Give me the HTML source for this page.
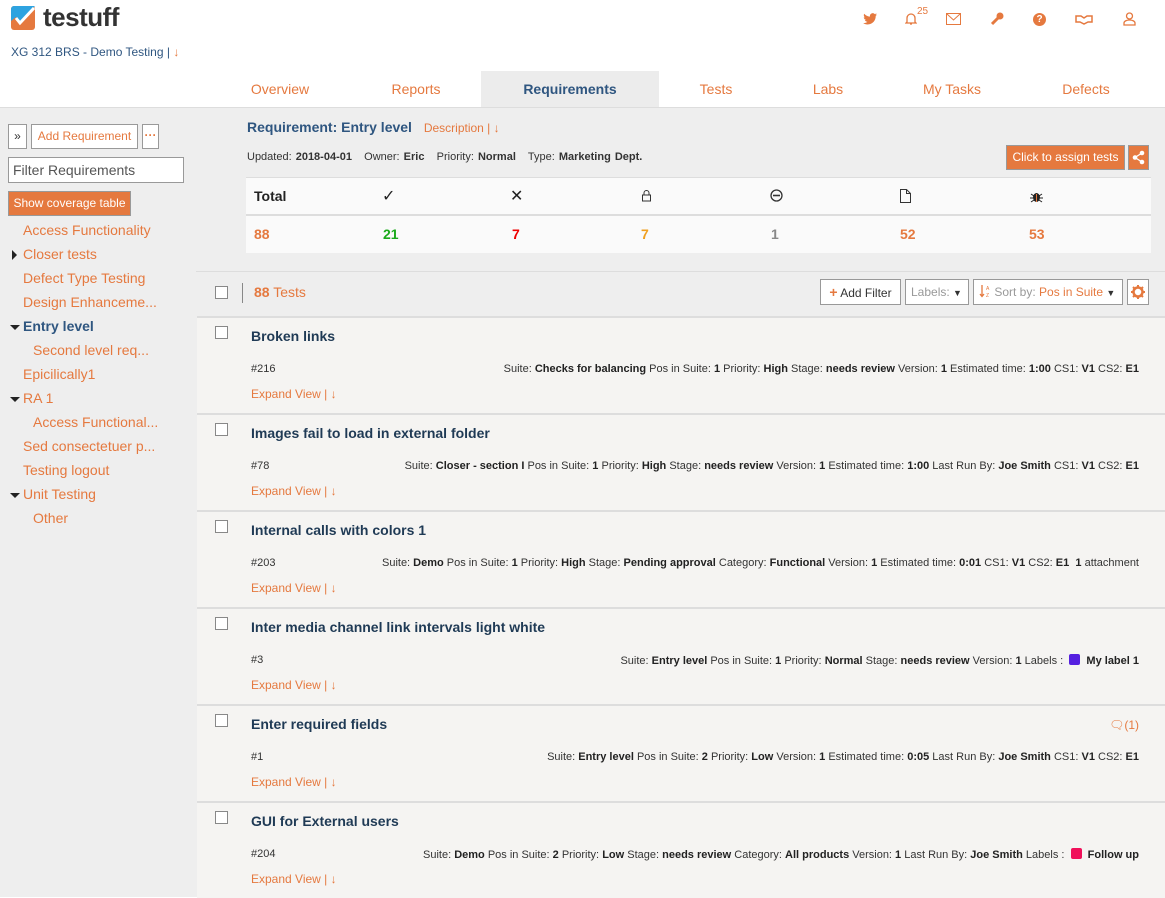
<!DOCTYPE html>
<html><head><meta charset="utf-8"><style>
*{box-sizing:border-box;margin:0;padding:0}
body{width:1165px;height:897px;overflow:hidden;background:#fff;font-family:"Liberation Sans",sans-serif;color:#333;position:relative}
.a{position:absolute}
.or{color:#e5793f}
.tab{position:absolute;top:71px;height:36px;line-height:36px;font-size:14px;color:#e5793f;text-align:center}
.side a{display:block;position:absolute;font-size:14px;color:#e5793f;white-space:nowrap}
.tri{position:absolute;width:0;height:0}
.btn{position:absolute;border:1px solid #999;background:#fff;font-size:12px;color:#e5793f;text-align:center}
.card{position:absolute;left:197px;width:968px;height:97px;background:#f5f4f2;border-top:2px solid #ddd}
.card .cb{position:absolute;left:18px;top:8px;width:13px;height:13px;border:1px solid #888;background:#fff}
.card .t{position:absolute;left:54px;top:10px;font-size:14px;font-weight:bold;color:#1f3a55}
.card .id{position:absolute;left:54px;top:45px;font-size:11px;color:#333}
.card .m{position:absolute;right:26px;top:45px;font-size:11px;color:#333;white-space:nowrap}
.card .m b{color:#222}
.card .ex{position:absolute;left:54px;top:69px;font-size:12px;color:#e5793f}
.st{position:absolute;font-size:14px;font-weight:bold}
</style></head><body>
<svg class="a" style="left:11px;top:6px" width="24" height="24" viewBox="0 0 24 24"><rect x="0" y="0" width="24" height="24" rx="3" fill="#e5793f"/><path d="M0 3a3 3 0 0 1 3-3h21L9 16 5 11 0 15z" fill="#2ea3e0"/><path d="M5 12l4 5L23 2" stroke="#fff" stroke-width="3" fill="none"/></svg>
<div class="a" style="left:43px;top:2px;font-size:26px;font-weight:bold;color:#333;letter-spacing:-0.5px">testuff</div>
<div class="a" style="left:11px;top:45px;font-size:12px;color:#2f5680">XG 312 BRS - Demo Testing | <span class="or">↓</span></div>
<svg class="a" style="left:863px;top:13px" width="14" height="12" viewBox="0 0 14 12"><path d="M14 1.5c-.5.2-1 .4-1.6.4.6-.4 1-.9 1.2-1.5-.6.3-1.2.6-1.8.7A2.8 2.8 0 0 0 7 3.6C4.7 3.5 2.6 2.4 1.2.7c-.8 1.3-.3 3 .9 3.8-.5 0-.9-.1-1.3-.4 0 1.4 1 2.5 2.3 2.8-.4.1-.9.1-1.3 0 .4 1.1 1.4 1.9 2.6 2-1.2.9-2.7 1.400-4.2 1.2C1.500 11 3 11.5 4.5 11.5c5.400 0 8.400-4.500 8.200-8.600.6-.4 1-.9 1.300-1.400z" fill="#e5793f"/></svg>
<svg class="a" style="left:905px;top:12px" width="12" height="14" viewBox="0 0 12 14"><path d="M2 10V6a4 4 0 0 1 8 0v4l1 1H1z M5 12h2" stroke="#e5793f" fill="none" stroke-width="1.3"/></svg>
<div class="a or" style="left:917px;top:6px;font-size:10px">25</div>
<svg class="a" style="left:946px;top:13px" width="15" height="12"><rect x="0.5" y="0.5" width="14" height="11" stroke="#e5793f" fill="none"/><path d="M1 1l6.5 6L14 1" stroke="#e5793f" fill="none"/></svg>
<svg class="a" style="left:990px;top:12px" width="14" height="14"><path d="M2 12l6-6" stroke="#e5793f" stroke-width="3"/><circle cx="10" cy="4" r="3.5" fill="#e5793f"/></svg>
<div class="a" style="left:1033px;top:13px;width:13px;height:13px;border-radius:50%;background:#e5793f;color:#fff;font-size:10px;font-weight:bold;text-align:center;line-height:13px">?</div>
<svg class="a" style="left:1075px;top:13px" width="18" height="12"><path d="M1 3h5l3 2 3-2h5v6h-4l-4 2-4-2H1z" stroke="#e5793f" fill="none" stroke-width="1.5"/></svg>
<svg class="a" style="left:1123px;top:12px" width="13" height="14"><circle cx="6.5" cy="4" r="3" stroke="#e5793f" fill="none" stroke-width="1.3"/><path d="M1 13v-2c0-2 3-3 5.5-3s5.5 1 5.5 3v2z" stroke="#e5793f" fill="none" stroke-width="1.3"/></svg>
<div class="a" style="left:0;top:107px;width:1165px;height:1px;background:#ddd"></div>
<div class="tab" style="left:230px;width:100px">Overview</div>
<div class="tab" style="left:366px;width:100px">Reports</div>
<div class="tab" style="left:481px;width:178px;background:#ececec;color:#2f5680;font-weight:bold">Requirements</div>
<div class="tab" style="left:676px;width:80px">Tests</div>
<div class="tab" style="left:788px;width:80px">Labs</div>
<div class="tab" style="left:902px;width:100px">My Tasks</div>
<div class="tab" style="left:1036px;width:100px">Defects</div>
<div class="a" style="left:0;top:108px;width:196px;height:789px;background:#eee"></div>
<div class="btn" style="left:8px;top:124px;width:19px;height:25px;line-height:23px;color:#333">»</div>
<div class="btn" style="left:31px;top:124px;width:107px;height:25px;line-height:23px">Add Requirement</div>
<div class="btn" style="left:142px;top:124px;width:17px;height:25px;line-height:20px;font-weight:bold">···</div>
<div class="a" style="left:8px;top:157px;width:176px;height:26px;border:1px solid #999;background:#fff;font-size:14px;color:#555;padding:4px 4px;line-height:17px">Filter Requirements</div>
<div class="a" style="left:8px;top:191px;width:123px;height:25px;background:#e5793f;border:1px solid #999;color:#fff;font-size:12px;line-height:23px;text-align:center">Show coverage table</div>
<div class="side">
<a style="left:23px;top:222px">Access Functionality</a>
<a style="left:23px;top:246px">Closer tests</a>
<a style="left:23px;top:270px">Defect Type Testing</a>
<a style="left:23px;top:294px">Design Enhanceme...</a>
<a style="left:23px;top:318px;color:#2f5680;font-weight:bold">Entry level</a>
<a style="left:33px;top:342px">Second level req...</a>
<a style="left:23px;top:366px">Epicilically1</a>
<a style="left:23px;top:390px">RA 1</a>
<a style="left:33px;top:414px">Access Functional...</a>
<a style="left:23px;top:438px">Sed consectetuer p...</a>
<a style="left:23px;top:462px">Testing logout</a>
<a style="left:23px;top:486px">Unit Testing</a>
<a style="left:33px;top:510px">Other</a>
</div>
<div class="tri" style="left:12px;top:250px;border-left:5px solid #222;border-top:5px solid transparent;border-bottom:5px solid transparent"></div>
<div class="tri" style="left:10px;top:325px;border-top:5px solid #222;border-left:5px solid transparent;border-right:5px solid transparent"></div>
<div class="tri" style="left:10px;top:397px;border-top:5px solid #222;border-left:5px solid transparent;border-right:5px solid transparent"></div>
<div class="tri" style="left:10px;top:493px;border-top:5px solid #222;border-left:5px solid transparent;border-right:5px solid transparent"></div>
<div class="a" style="left:196px;top:108px;width:969px;height:789px;background:#eee"></div>
<div class="a" style="left:247px;top:119px;font-size:14px;font-weight:bold;color:#2f5680">Requirement: Entry level <span style="font-weight:normal;font-size:12px;color:#e5793f;margin-left:8px">Description | ↓</span></div>
<div class="a" style="left:247px;top:151px;font-size:11px;color:#333;word-spacing:1px">Updated: <b>2018-04-01</b> &nbsp; Owner: <b>Eric</b> &nbsp; Priority: <b>Normal</b> &nbsp; Type: <b>Marketing Dept.</b></div>
<div class="a" style="left:1006px;top:145px;width:119px;height:25px;background:#e5793f;border:1px solid #999;color:#fff;font-size:12px;line-height:23px;text-align:center">Click to assign tests</div>
<div class="a" style="left:1128px;top:145px;width:21px;height:25px;background:#e5793f;border:1px solid #999"><svg width="19" height="23"><circle cx="13" cy="7" r="2.3" fill="#fff"/><circle cx="13" cy="16" r="2.3" fill="#fff"/><circle cx="6" cy="11.5" r="2.3" fill="#fff"/><path d="M13 7L6 11.5 13 16" stroke="#fff" stroke-width="1.3" fill="none"/></svg></div>
<div class="a" style="left:246px;top:177px;width:905px;height:76px;background:#fafafa;border-top:1px solid #ddd"></div>
<div class="a" style="left:246px;top:214px;width:905px;height:2px;background:#ddd"></div>
<div class="st" style="left:254px;top:188px;color:#222">Total</div>
<div class="st" style="left:382px;top:186px;font-size:16px;font-weight:normal;color:#222">✓</div>
<div class="st" style="left:510px;top:186px;font-size:16px;font-weight:normal;color:#222">✕</div>
<svg class="a" style="left:641px;top:189px" width="11" height="13"><path d="M3 6V4a2.5 2.5 0 0 1 5 0v2" stroke="#333" fill="none"/><rect x="1.5" y="6" width="8" height="6" stroke="#333" fill="none"/></svg>
<svg class="a" style="left:770px;top:189px" width="13" height="13"><circle cx="6.5" cy="6.5" r="5.5" stroke="#333" fill="none" stroke-width="1.3"/><path d="M3 6.5h7" stroke="#333" stroke-width="1.6"/></svg>
<svg class="a" style="left:899px;top:189px" width="13" height="14"><path d="M1.5 .5h6l4 4v9h-10z M7.5 .5v4h4" stroke="#333" fill="none"/></svg>
<svg class="a" style="left:1030px;top:190px" width="13" height="13"><ellipse cx="6.5" cy="7.5" rx="3.5" ry="4.5" fill="#222"/><path d="M1 4l3 2M12 4l-3 2M0 8h3M10 8h3M1 12l3-2M12 12l-3-2" stroke="#222"/><path d="M6.5 4v8" stroke="#e5793f"/></svg>
<div class="st" style="left:254px;top:226px;color:#e5793f">88</div>
<div class="st" style="left:383px;top:226px;color:#1aaa1a">21</div>
<div class="st" style="left:512px;top:226px;color:#e00">7</div>
<div class="st" style="left:641px;top:226px;color:#f0a020">7</div>
<div class="st" style="left:771px;top:226px;color:#888">1</div>
<div class="st" style="left:900px;top:226px;color:#e5793f">52</div>
<div class="st" style="left:1029px;top:226px;color:#e5793f">53</div>
<div class="a" style="left:196px;top:271px;width:969px;height:1px;background:#ddd"></div>
<div class="a" style="left:215px;top:286px;width:13px;height:13px;border:1px solid #888;background:#fff"></div>
<div class="a" style="left:242px;top:283px;width:1px;height:20px;background:#888"></div>
<div class="a" style="left:254px;top:284px;font-size:14px;color:#e5793f"><b>88</b> Tests</div>
<div class="btn" style="left:820px;top:279px;width:81px;height:26px;line-height:24px;color:#333"><span class="or" style="font-weight:bold;font-size:14px">+</span> Add Filter</div>
<div class="btn" style="left:905px;top:279px;width:64px;height:26px;line-height:24px;color:#999;text-align:left;padding-left:5px">Labels: <span style="color:#333;font-size:9px">▼</span></div>
<div class="btn" style="left:973px;top:279px;width:150px;height:26px;line-height:24px;color:#999;text-align:left;padding-left:5px"><svg width="12" height="14" style="vertical-align:-2px"><path d="M3 1v11M1 10l2 2.5L5 10" stroke="#e5793f" fill="none" stroke-width="1.3"/><text x="7" y="6" font-size="5" fill="#e5793f" font-family="Liberation Sans">A</text><text x="7" y="13" font-size="5" fill="#e5793f" font-family="Liberation Sans">Z</text></svg> Sort by: <span class="or">Pos in Suite</span> <span style="color:#333;font-size:9px">▼</span></div>
<div class="btn" style="left:1127px;top:279px;width:22px;height:26px"><svg width="20" height="24"><circle cx="10" cy="12" r="4.5" fill="none" stroke="#e5793f" stroke-width="2.5"/><path d="M10 5v3M10 16v3M3 12h3M14 12h3M5 7l2 2M13 15l2 2M15 7l-2 2M7 15l-2 2" stroke="#e5793f" stroke-width="2"/></svg></div>
<div class="card" style="top:316px"><div class="cb"></div><div class="t">Broken links</div><div class="id">#216</div><div class="m">Suite: <b>Checks for balancing</b> Pos in Suite: <b>1</b> Priority: <b>High</b> Stage: <b>needs review</b> Version: <b>1</b> Estimated time: <b>1:00</b> CS1: <b>V1</b> CS2: <b>E1</b></div><div class="ex">Expand View | ↓</div></div>
<div class="card" style="top:413px"><div class="cb"></div><div class="t">Images fail to load in external folder</div><div class="id">#78</div><div class="m">Suite: <b>Closer - section I</b> Pos in Suite: <b>1</b> Priority: <b>High</b> Stage: <b>needs review</b> Version: <b>1</b> Estimated time: <b>1:00</b> Last Run By: <b>Joe Smith</b> CS1: <b>V1</b> CS2: <b>E1</b></div><div class="ex">Expand View | ↓</div></div>
<div class="card" style="top:510px"><div class="cb"></div><div class="t">Internal calls with colors 1</div><div class="id">#203</div><div class="m">Suite: <b>Demo</b> Pos in Suite: <b>1</b> Priority: <b>High</b> Stage: <b>Pending approval</b> Category: <b>Functional</b> Version: <b>1</b> Estimated time: <b>0:01</b> CS1: <b>V1</b> CS2: <b>E1</b> &nbsp;<b>1</b> attachment</div><div class="ex">Expand View | ↓</div></div>
<div class="card" style="top:607px"><div class="cb"></div><div class="t">Inter media channel link intervals light white</div><div class="id">#3</div><div class="m">Suite: <b>Entry level</b> Pos in Suite: <b>1</b> Priority: <b>Normal</b> Stage: <b>needs review</b> Version: <b>1</b> Labels : &nbsp;<span style="display:inline-block;width:11px;height:11px;border-radius:2px;background:#5520e0;vertical-align:-1px"></span>&nbsp; <b>My label 1</b></div><div class="ex">Expand View | ↓</div></div>
<div class="card" style="top:704px"><div class="cb"></div><div class="t">Enter required fields</div><div class="a" style="right:26px;top:12px;font-size:12px;color:#e5793f">🗨︎(1)</div><div class="id">#1</div><div class="m">Suite: <b>Entry level</b> Pos in Suite: <b>2</b> Priority: <b>Low</b> Version: <b>1</b> Estimated time: <b>0:05</b> Last Run By: <b>Joe Smith</b> CS1: <b>V1</b> CS2: <b>E1</b></div><div class="ex">Expand View | ↓</div></div>
<div class="card" style="top:801px"><div class="cb"></div><div class="t">GUI for External users</div><div class="id">#204</div><div class="m">Suite: <b>Demo</b> Pos in Suite: <b>2</b> Priority: <b>Low</b> Stage: <b>needs review</b> Category: <b>All products</b> Version: <b>1</b> Last Run By: <b>Joe Smith</b> Labels : &nbsp;<span style="display:inline-block;width:11px;height:11px;border-radius:2px;background:#f0105a;vertical-align:-1px"></span>&nbsp; <b>Follow up</b></div><div class="ex">Expand View | ↓</div></div>
</body></html>
